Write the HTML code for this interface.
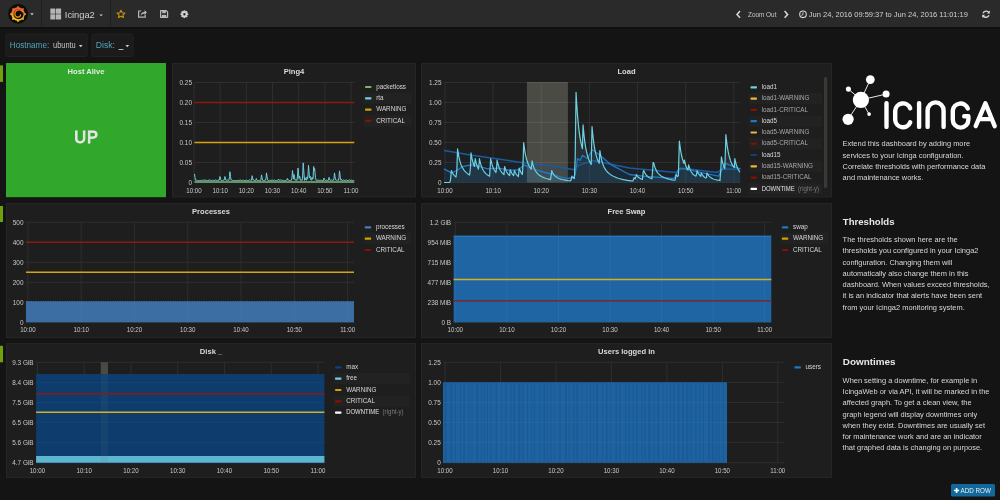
<!DOCTYPE html>
<html><head><meta charset="utf-8"><title>Icinga2 - Grafana</title>
<style>html,body{margin:0;padding:0;background:#141414;width:1000px;height:500px;overflow:hidden}svg{display:block;will-change:transform}text{white-space:pre}</style>
</head><body>
<svg width="1000" height="500" viewBox="0 0 1000 500" font-family='"Liberation Sans", sans-serif'><rect x="0.00" y="0.00" width="1000.00" height="500.00" fill="#141414" /><rect x="0.00" y="0.00" width="1000.00" height="27.00" fill="#2a2a2a" /><rect x="0.00" y="27.20" width="1000.00" height="1.40" fill="#101010" /><line x1="41.50" y1="0.00" x2="41.50" y2="27.00" stroke="#1e1e1e" stroke-width="1" /><line x1="110.50" y1="0.00" x2="110.50" y2="27.00" stroke="#1e1e1e" stroke-width="1" /><circle cx="18.1" cy="13.8" r="9.9" fill="#0b0b0b"/><defs><linearGradient id="lg" x1="0" y1="1" x2="0" y2="0"><stop offset="0.15" stop-color="#fcc012"/><stop offset="0.5" stop-color="#f8a41a"/><stop offset="0.55" stop-color="#f27a24"/><stop offset="1" stop-color="#f05a28"/></linearGradient></defs><polygon points="18.00,5.80 18.74,6.44 19.31,7.43 19.94,7.59 20.56,7.81 21.16,8.09 21.72,8.43 22.82,8.13 23.80,8.20 23.87,9.18 23.57,10.28 23.91,10.84 24.19,11.44 24.41,12.06 24.57,12.69 25.56,13.26 26.20,14.00 25.56,14.74 24.57,15.31 24.41,15.94 24.19,16.56 23.91,17.16 23.57,17.72 23.87,18.82 23.80,19.80 22.82,19.87 21.72,19.57 21.16,19.91 20.56,20.19 19.94,20.41 19.31,20.57 18.74,21.56 18.00,22.20 17.26,21.56 16.69,20.57 16.06,20.41 15.44,20.19 14.84,19.91 14.28,19.57 13.18,19.87 12.20,19.80 12.13,18.82 12.43,17.72 12.09,17.16 11.81,16.56 11.59,15.94 11.43,15.31 10.44,14.74 9.80,14.00 10.44,13.26 11.43,12.69 11.59,12.06 11.81,11.44 12.09,10.84 12.43,10.28 12.13,9.18 12.20,8.20 13.18,8.13 14.28,8.43 14.84,8.09 15.44,7.81 16.06,7.59 16.69,7.43 17.26,6.44" fill="url(#lg)"/><circle cx="18.5" cy="14.3" r="5.0" fill="#0b0b0b"/><polyline points="23.03,12.19 22.63,11.62 22.16,11.11 21.64,10.69 21.07,10.35 20.46,10.10 19.83,9.93 19.20,9.86 18.58,9.88 17.97,9.98 17.39,10.17 16.86,10.43 16.37,10.76 15.95,11.15 15.59,11.58 15.30,12.06 15.08,12.56 14.94,13.07 14.87,13.59 14.88,14.11 14.96,14.61 15.11,15.08 15.32,15.52 15.59,15.92 15.90,16.26 16.25,16.55 16.63,16.79 17.02,16.96 17.44,17.07 17.85,17.12 18.25,17.11 18.64,17.05 19.01,16.93 19.35,16.77 19.65,16.56 19.91,16.32 20.13,16.05 20.30,15.76 20.42,15.46 20.50,15.15 20.53,14.84" fill="none" stroke="url(#lg2)" stroke-width="1.35" stroke-linecap="round"/><defs><linearGradient id="lg2" gradientUnits="userSpaceOnUse" x1="0" y1="20" x2="0" y2="8"><stop offset="0" stop-color="#f9b41a"/><stop offset="1" stop-color="#f26522"/></linearGradient></defs><path d="M30.2,13.2 L33.8,13.2 L32,15.2 Z" fill="#c8c8c8"/><rect x="50.30" y="8.60" width="5.10" height="5.10" fill="#b4b4b4" rx="0.5"/><rect x="50.30" y="14.30" width="5.10" height="5.10" fill="#b4b4b4" rx="0.5"/><rect x="56.00" y="8.60" width="5.10" height="5.10" fill="#b4b4b4" rx="0.5"/><rect x="56.00" y="14.30" width="5.10" height="5.10" fill="#b4b4b4" rx="0.5"/><text x="64.80" y="18.00" font-size="9.8" fill="#d0d0d0" text-anchor="start" font-weight="normal" textLength="30" lengthAdjust="spacingAndGlyphs">Icinga2</text><path d="M99.3,14.4 L102.9,14.4 L101.1,16.3 Z" fill="#c8c8c8"/><path d="M121,10.3 L122.2,12.8 L124.9,13.1 L122.9,14.9 L123.5,17.6 L121,16.2 L118.5,17.6 L119.1,14.9 L117.1,13.1 L119.8,12.8 Z" fill="none" stroke="#c4960f" stroke-width="1.1" stroke-linejoin="round"/><path d="M145.2,14.8 L145.2,17.2 L138.6,17.2 L138.6,11 L141.2,11" fill="none" stroke="#b8b8b8" stroke-width="1.2" stroke-linejoin="round"/><path d="M140.6,15.6 Q141,12 144.6,12 L144.6,10.0 L146.8,12.6 L144.6,15.0 L144.6,13.4 Q142.2,13.4 140.6,15.6 Z" fill="#c0c0c0"/><path d="M160.6,10.6 L166.2,10.6 L167.6,12 L167.6,17.3 L160.6,17.3 Z" fill="none" stroke="#b8b8b8" stroke-width="1.2" stroke-linejoin="round"/><rect x="162.20" y="10.80" width="3.60" height="2.40" fill="#b8b8b8" /><rect x="161.90" y="14.90" width="4.40" height="2.20" fill="#b8b8b8" /><g transform="translate(184.4,14.2)"><circle r="2.15" fill="none" stroke="#d0d0d0" stroke-width="1.9"/><rect x="-0.85" y="-3.9" width="1.7" height="1.6" fill="#d0d0d0" transform="rotate(0)"/><rect x="-0.85" y="-3.9" width="1.7" height="1.6" fill="#d0d0d0" transform="rotate(45)"/><rect x="-0.85" y="-3.9" width="1.7" height="1.6" fill="#d0d0d0" transform="rotate(90)"/><rect x="-0.85" y="-3.9" width="1.7" height="1.6" fill="#d0d0d0" transform="rotate(135)"/><rect x="-0.85" y="-3.9" width="1.7" height="1.6" fill="#d0d0d0" transform="rotate(180)"/><rect x="-0.85" y="-3.9" width="1.7" height="1.6" fill="#d0d0d0" transform="rotate(225)"/><rect x="-0.85" y="-3.9" width="1.7" height="1.6" fill="#d0d0d0" transform="rotate(270)"/><rect x="-0.85" y="-3.9" width="1.7" height="1.6" fill="#d0d0d0" transform="rotate(315)"/></g><path d="M740,11 L737,14.4 L740,17.8" fill="none" stroke="#d8d8d8" stroke-width="1.5"/><text x="748.00" y="17.20" font-size="6.4" fill="#c8c8c8" text-anchor="start" font-weight="normal" >Zoom Out</text><path d="M784.6,11 L787.6,14.4 L784.6,17.8" fill="none" stroke="#d8d8d8" stroke-width="1.5"/><circle cx="803" cy="14.3" r="3.3" fill="none" stroke="#d8d8d8" stroke-width="1.1"/><path d="M803,12.3 L803,14.6 L801.4,15.3" fill="none" stroke="#d8d8d8" stroke-width="0.9"/><text x="808.80" y="17.20" font-size="7.5" fill="#d0d0d0" text-anchor="start" font-weight="normal" >Jun 24, 2016 09:59:37 to Jun 24, 2016 11:01:19</text><path d="M983,13.2 A3.6,3.6 0 0 1 989,12.4" fill="none" stroke="#d8d8d8" stroke-width="1.4"/><path d="M989.8,10.6 L989.8,13.6 L986.8,13.6 Z" fill="#d8d8d8"/><path d="M989,15.2 A3.6,3.6 0 0 1 983,16" fill="none" stroke="#d8d8d8" stroke-width="1.4"/><path d="M982.2,17.8 L982.2,14.8 L985.2,14.8 Z" fill="#d8d8d8"/><rect x="6.00" y="34.00" width="81.00" height="22.50" fill="#1c1b1b" stroke="#232222" stroke-width="1" rx="1.5"/><text x="9.80" y="48.40" font-size="8.4" fill="#52a3bf" text-anchor="start" font-weight="normal" textLength="39.4" lengthAdjust="spacingAndGlyphs">Hostname:</text><text x="53.00" y="48.40" font-size="8.2" fill="#c4c4c4" text-anchor="start" font-weight="normal" textLength="22.7" lengthAdjust="spacingAndGlyphs">ubuntu</text><path d="M78.9,45.1 L82.6,45.1 L80.75,47.2 Z" fill="#d0d0d0"/><rect x="92.00" y="34.00" width="41.00" height="22.50" fill="#1c1b1b" stroke="#232222" stroke-width="1" rx="1.5"/><text x="95.70" y="48.40" font-size="8.4" fill="#52a3bf" text-anchor="start" font-weight="normal" textLength="19.3" lengthAdjust="spacingAndGlyphs">Disk:</text><rect x="118.60" y="49.10" width="4.80" height="0.90" fill="#c4c4c4" /><path d="M125.5,45.1 L129.2,45.1 L127.35,47.2 Z" fill="#d0d0d0"/><rect x="0.00" y="65.40" width="3.00" height="16.50" fill="#70a00b" /><rect x="0.00" y="206.00" width="3.00" height="16.00" fill="#70a00b" /><rect x="0.00" y="345.80" width="3.00" height="16.50" fill="#70a00b" /><rect x="6.00" y="63.00" width="160.00" height="134.20" fill="#31a72c" /><text x="86.00" y="74.00" font-size="7.6" fill="#e3eee2" text-anchor="middle" font-weight="bold" >Host Alive</text><text x="86.50" y="142.70" font-size="16.5" fill="#e9e6ea" text-anchor="middle" font-weight="normal" stroke="#e9e6ea" stroke-width="0.85" letter-spacing="0.9">UP</text><rect x="172.50" y="63.50" width="243.00" height="133.50" fill="#1f1e1e" stroke="#262525" stroke-width="1"/><text x="294.00" y="73.80" font-size="7.6" fill="#d8d9da" text-anchor="middle" font-weight="bold" >Ping4</text><line x1="194.50" y1="82.50" x2="354.30" y2="82.50" stroke="#2e2e2e" stroke-width="1" /><text x="192.00" y="85.10" font-size="7.0" fill="#c8c8c8" text-anchor="end" font-weight="normal" textLength="12.46" lengthAdjust="spacingAndGlyphs">0.25</text><line x1="194.50" y1="102.50" x2="354.30" y2="102.50" stroke="#2e2e2e" stroke-width="1" /><text x="192.00" y="105.10" font-size="7.0" fill="#c8c8c8" text-anchor="end" font-weight="normal" textLength="12.46" lengthAdjust="spacingAndGlyphs">0.20</text><line x1="194.50" y1="122.50" x2="354.30" y2="122.50" stroke="#2e2e2e" stroke-width="1" /><text x="192.00" y="125.10" font-size="7.0" fill="#c8c8c8" text-anchor="end" font-weight="normal" textLength="12.46" lengthAdjust="spacingAndGlyphs">0.15</text><line x1="194.50" y1="142.50" x2="354.30" y2="142.50" stroke="#2e2e2e" stroke-width="1" /><text x="192.00" y="145.10" font-size="7.0" fill="#c8c8c8" text-anchor="end" font-weight="normal" textLength="12.46" lengthAdjust="spacingAndGlyphs">0.10</text><line x1="194.50" y1="162.50" x2="354.30" y2="162.50" stroke="#2e2e2e" stroke-width="1" /><text x="192.00" y="165.10" font-size="7.0" fill="#c8c8c8" text-anchor="end" font-weight="normal" textLength="12.46" lengthAdjust="spacingAndGlyphs">0.05</text><line x1="194.50" y1="182.50" x2="354.30" y2="182.50" stroke="#2e2e2e" stroke-width="1" /><text x="192.00" y="185.10" font-size="7.0" fill="#c8c8c8" text-anchor="end" font-weight="normal" textLength="3.56" lengthAdjust="spacingAndGlyphs">0</text><line x1="194.00" y1="82.50" x2="194.00" y2="182.50" stroke="#2e2e2e" stroke-width="1" /><text x="194.00" y="192.60" font-size="7.1" fill="#c8c8c8" text-anchor="middle" font-weight="normal" textLength="15.39" lengthAdjust="spacingAndGlyphs">10:00</text><line x1="220.17" y1="82.50" x2="220.17" y2="182.50" stroke="#2e2e2e" stroke-width="1" /><text x="220.17" y="192.60" font-size="7.1" fill="#c8c8c8" text-anchor="middle" font-weight="normal" textLength="15.39" lengthAdjust="spacingAndGlyphs">10:10</text><line x1="246.33" y1="82.50" x2="246.33" y2="182.50" stroke="#2e2e2e" stroke-width="1" /><text x="246.33" y="192.60" font-size="7.1" fill="#c8c8c8" text-anchor="middle" font-weight="normal" textLength="15.39" lengthAdjust="spacingAndGlyphs">10:20</text><line x1="272.50" y1="82.50" x2="272.50" y2="182.50" stroke="#2e2e2e" stroke-width="1" /><text x="272.50" y="192.60" font-size="7.1" fill="#c8c8c8" text-anchor="middle" font-weight="normal" textLength="15.39" lengthAdjust="spacingAndGlyphs">10:30</text><line x1="298.67" y1="82.50" x2="298.67" y2="182.50" stroke="#2e2e2e" stroke-width="1" /><text x="298.67" y="192.60" font-size="7.1" fill="#c8c8c8" text-anchor="middle" font-weight="normal" textLength="15.39" lengthAdjust="spacingAndGlyphs">10:40</text><line x1="324.83" y1="82.50" x2="324.83" y2="182.50" stroke="#2e2e2e" stroke-width="1" /><text x="324.83" y="192.60" font-size="7.1" fill="#c8c8c8" text-anchor="middle" font-weight="normal" textLength="15.39" lengthAdjust="spacingAndGlyphs">10:50</text><line x1="351.00" y1="82.50" x2="351.00" y2="182.50" stroke="#2e2e2e" stroke-width="1" /><text x="351.00" y="192.60" font-size="7.1" fill="#c8c8c8" text-anchor="middle" font-weight="normal" textLength="14.93" lengthAdjust="spacingAndGlyphs">11:00</text><path d="M194.50,182.50 L194.50,173.93 L195.00,177.50 L195.50,180.18 L196.00,180.64 L196.50,180.27 L197.00,180.41 L197.50,180.65 L198.00,180.29 L198.50,180.67 L199.00,180.35 L199.50,180.64 L200.00,180.63 L200.50,180.36 L201.00,180.04 L201.50,180.60 L202.00,180.52 L202.50,180.20 L203.00,179.94 L203.50,180.24 L204.00,180.38 L204.50,179.92 L205.00,180.66 L205.50,180.01 L206.00,180.47 L206.50,180.58 L207.00,180.61 L207.50,180.45 L208.00,180.05 L208.50,180.56 L209.00,180.23 L209.20,179.70 L209.50,180.19 L210.00,180.40 L210.50,180.26 L211.00,180.65 L211.50,180.65 L212.00,180.54 L212.50,180.16 L213.00,180.36 L213.50,180.45 L214.00,180.23 L214.50,180.34 L215.00,180.46 L215.50,180.06 L216.00,180.14 L216.50,180.50 L217.00,180.24 L217.50,180.28 L218.00,180.00 L218.50,180.12 L219.00,180.47 L219.50,179.17 L219.90,176.50 L220.00,176.93 L220.50,179.07 L221.00,180.09 L221.50,180.58 L222.00,180.31 L222.50,180.67 L223.00,180.17 L223.50,180.09 L224.00,180.24 L224.50,179.17 L224.90,176.50 L225.00,176.93 L225.50,179.07 L226.00,180.22 L226.50,180.24 L227.00,180.34 L227.50,180.03 L228.00,179.94 L228.50,180.32 L229.00,180.17 L229.50,176.50 L229.90,171.70 L230.00,172.47 L230.50,176.33 L231.00,179.91 L231.50,180.04 L232.00,180.47 L232.50,180.39 L233.00,180.17 L233.50,180.68 L234.00,180.33 L234.50,180.57 L235.00,180.61 L235.50,180.65 L236.00,180.09 L236.50,180.60 L237.00,180.50 L237.50,180.39 L238.00,180.00 L238.50,180.64 L239.00,180.34 L239.50,180.26 L240.00,179.99 L240.50,180.04 L241.00,180.01 L241.50,180.48 L242.00,180.37 L242.50,180.41 L243.00,179.99 L243.50,179.93 L244.00,180.58 L244.50,180.56 L245.00,180.51 L245.50,180.51 L246.00,180.31 L246.50,180.23 L247.00,180.49 L247.50,180.70 L248.00,180.36 L248.50,180.40 L249.00,180.25 L249.50,179.94 L250.00,180.15 L250.50,180.29 L251.00,180.21 L251.50,180.16 L252.00,176.46 L252.10,175.70 L252.50,177.64 L253.00,180.07 L253.50,180.00 L254.00,180.06 L254.50,180.39 L255.00,180.38 L255.50,180.62 L256.00,179.83 L256.30,178.50 L256.50,179.07 L257.00,180.50 L257.50,180.53 L258.00,180.57 L258.50,180.43 L259.00,180.66 L259.50,180.70 L260.00,180.58 L260.50,180.62 L261.00,179.12 L261.50,174.90 L262.00,177.61 L262.50,180.21 L263.00,180.58 L263.50,180.50 L264.00,180.42 L264.50,180.41 L265.00,180.60 L265.50,180.02 L266.00,178.23 L266.50,172.90 L267.00,176.33 L267.50,179.76 L268.00,180.62 L268.50,180.43 L269.00,180.49 L269.50,180.04 L270.00,180.57 L270.50,180.68 L271.00,179.94 L271.50,180.28 L272.00,180.58 L272.50,180.27 L273.00,180.68 L273.50,180.28 L274.00,179.92 L274.50,180.01 L275.00,180.14 L275.50,180.49 L276.00,180.41 L276.50,180.57 L277.00,180.08 L277.50,180.27 L278.00,180.08 L278.50,179.30 L279.00,180.44 L279.50,180.05 L280.00,179.91 L280.50,180.02 L281.00,180.06 L281.50,180.05 L282.00,180.11 L282.50,180.52 L283.00,180.29 L283.50,180.42 L284.00,180.68 L284.50,180.68 L285.00,180.48 L285.50,180.49 L286.00,180.15 L286.50,179.93 L287.00,180.34 L287.50,178.50 L288.00,179.91 L288.50,179.94 L289.00,180.41 L289.50,180.52 L290.00,180.52 L290.50,180.54 L291.00,180.54 L291.50,180.20 L292.00,177.17 L292.50,170.50 L293.00,174.79 L293.50,178.94 L294.00,174.50 L294.50,177.36 L295.00,180.17 L295.50,179.97 L296.00,180.07 L296.50,180.10 L297.00,180.32 L297.50,176.10 L298.00,168.10 L298.50,173.24 L299.00,178.39 L299.50,176.81 L299.60,176.10 L300.00,177.93 L300.50,180.21 L301.00,179.94 L301.50,180.12 L302.00,180.56 L302.50,178.14 L303.00,167.26 L303.20,162.90 L303.50,167.10 L304.00,174.10 L304.50,180.37 L305.00,177.70 L305.50,179.41 L306.00,180.17 L306.50,180.01 L307.00,176.90 L307.50,178.90 L308.00,174.86 L308.50,165.30 L309.00,171.44 L309.50,177.59 L310.00,176.10 L310.50,178.39 L311.00,180.00 L311.50,180.04 L312.00,177.30 L312.50,179.16 L313.00,178.94 L313.50,170.06 L313.70,166.50 L314.00,169.93 L314.50,170.06 L314.60,168.50 L315.00,172.50 L315.50,177.50 L316.00,179.97 L316.50,180.42 L317.00,180.33 L317.50,180.23 L318.00,179.98 L318.50,180.36 L319.00,179.97 L319.50,180.30 L320.00,180.27 L320.50,180.28 L321.00,180.69 L321.50,180.35 L322.00,180.55 L322.50,180.70 L323.00,180.06 L323.50,180.54 L324.00,178.10 L324.50,179.67 L325.00,180.25 L325.50,180.44 L326.00,180.29 L326.50,180.26 L327.00,180.07 L327.50,180.62 L328.00,180.25 L328.50,180.19 L329.00,177.30 L329.50,179.16 L330.00,180.29 L330.50,180.25 L331.00,180.09 L331.50,179.97 L332.00,180.35 L332.50,180.21 L333.00,180.30 L333.50,180.29 L334.00,178.23 L334.50,172.90 L335.00,176.33 L335.50,179.76 L336.00,179.95 L336.50,180.14 L337.00,180.00 L337.50,179.95 L338.00,180.49 L338.50,180.25 L339.00,177.34 L339.50,170.90 L340.00,175.04 L340.50,179.19 L341.00,180.35 L341.50,179.30 L342.00,180.44 L342.50,180.64 L343.00,180.16 L343.50,180.07 L344.00,179.98 L344.50,180.58 L345.00,180.13 L345.50,180.17 L346.00,180.59 L346.50,179.99 L347.00,179.93 L347.50,180.52 L348.00,179.94 L348.50,180.38 L349.00,180.31 L349.50,179.91 L350.00,180.03 L350.50,180.57 L351.00,180.35 L351.50,180.10 L352.00,180.43 L352.50,180.54 L353.00,180.45 L353.50,180.12 L354.00,180.68 L354.00,182.50 Z" fill="#6ED0E0" fill-opacity="0.1"/><line x1="194.50" y1="102.50" x2="354.30" y2="102.50" stroke="#8a1a0e" stroke-width="1.5" /><line x1="194.50" y1="142.50" x2="354.30" y2="142.50" stroke="#d5a411" stroke-width="1.5" /><polyline points="194.50,173.93 195.00,177.50 195.50,180.18 196.00,180.64 196.50,180.27 197.00,180.41 197.50,180.65 198.00,180.29 198.50,180.67 199.00,180.35 199.50,180.64 200.00,180.63 200.50,180.36 201.00,180.04 201.50,180.60 202.00,180.52 202.50,180.20 203.00,179.94 203.50,180.24 204.00,180.38 204.50,179.92 205.00,180.66 205.50,180.01 206.00,180.47 206.50,180.58 207.00,180.61 207.50,180.45 208.00,180.05 208.50,180.56 209.00,180.23 209.20,179.70 209.50,180.19 210.00,180.40 210.50,180.26 211.00,180.65 211.50,180.65 212.00,180.54 212.50,180.16 213.00,180.36 213.50,180.45 214.00,180.23 214.50,180.34 215.00,180.46 215.50,180.06 216.00,180.14 216.50,180.50 217.00,180.24 217.50,180.28 218.00,180.00 218.50,180.12 219.00,180.47 219.50,179.17 219.90,176.50 220.00,176.93 220.50,179.07 221.00,180.09 221.50,180.58 222.00,180.31 222.50,180.67 223.00,180.17 223.50,180.09 224.00,180.24 224.50,179.17 224.90,176.50 225.00,176.93 225.50,179.07 226.00,180.22 226.50,180.24 227.00,180.34 227.50,180.03 228.00,179.94 228.50,180.32 229.00,180.17 229.50,176.50 229.90,171.70 230.00,172.47 230.50,176.33 231.00,179.91 231.50,180.04 232.00,180.47 232.50,180.39 233.00,180.17 233.50,180.68 234.00,180.33 234.50,180.57 235.00,180.61 235.50,180.65 236.00,180.09 236.50,180.60 237.00,180.50 237.50,180.39 238.00,180.00 238.50,180.64 239.00,180.34 239.50,180.26 240.00,179.99 240.50,180.04 241.00,180.01 241.50,180.48 242.00,180.37 242.50,180.41 243.00,179.99 243.50,179.93 244.00,180.58 244.50,180.56 245.00,180.51 245.50,180.51 246.00,180.31 246.50,180.23 247.00,180.49 247.50,180.70 248.00,180.36 248.50,180.40 249.00,180.25 249.50,179.94 250.00,180.15 250.50,180.29 251.00,180.21 251.50,180.16 252.00,176.46 252.10,175.70 252.50,177.64 253.00,180.07 253.50,180.00 254.00,180.06 254.50,180.39 255.00,180.38 255.50,180.62 256.00,179.83 256.30,178.50 256.50,179.07 257.00,180.50 257.50,180.53 258.00,180.57 258.50,180.43 259.00,180.66 259.50,180.70 260.00,180.58 260.50,180.62 261.00,179.12 261.50,174.90 262.00,177.61 262.50,180.21 263.00,180.58 263.50,180.50 264.00,180.42 264.50,180.41 265.00,180.60 265.50,180.02 266.00,178.23 266.50,172.90 267.00,176.33 267.50,179.76 268.00,180.62 268.50,180.43 269.00,180.49 269.50,180.04 270.00,180.57 270.50,180.68 271.00,179.94 271.50,180.28 272.00,180.58 272.50,180.27 273.00,180.68 273.50,180.28 274.00,179.92 274.50,180.01 275.00,180.14 275.50,180.49 276.00,180.41 276.50,180.57 277.00,180.08 277.50,180.27 278.00,180.08 278.50,179.30 279.00,180.44 279.50,180.05 280.00,179.91 280.50,180.02 281.00,180.06 281.50,180.05 282.00,180.11 282.50,180.52 283.00,180.29 283.50,180.42 284.00,180.68 284.50,180.68 285.00,180.48 285.50,180.49 286.00,180.15 286.50,179.93 287.00,180.34 287.50,178.50 288.00,179.91 288.50,179.94 289.00,180.41 289.50,180.52 290.00,180.52 290.50,180.54 291.00,180.54 291.50,180.20 292.00,177.17 292.50,170.50 293.00,174.79 293.50,178.94 294.00,174.50 294.50,177.36 295.00,180.17 295.50,179.97 296.00,180.07 296.50,180.10 297.00,180.32 297.50,176.10 298.00,168.10 298.50,173.24 299.00,178.39 299.50,176.81 299.60,176.10 300.00,177.93 300.50,180.21 301.00,179.94 301.50,180.12 302.00,180.56 302.50,178.14 303.00,167.26 303.20,162.90 303.50,167.10 304.00,174.10 304.50,180.37 305.00,177.70 305.50,179.41 306.00,180.17 306.50,180.01 307.00,176.90 307.50,178.90 308.00,174.86 308.50,165.30 309.00,171.44 309.50,177.59 310.00,176.10 310.50,178.39 311.00,180.00 311.50,180.04 312.00,177.30 312.50,179.16 313.00,178.94 313.50,170.06 313.70,166.50 314.00,169.93 314.50,170.06 314.60,168.50 315.00,172.50 315.50,177.50 316.00,179.97 316.50,180.42 317.00,180.33 317.50,180.23 318.00,179.98 318.50,180.36 319.00,179.97 319.50,180.30 320.00,180.27 320.50,180.28 321.00,180.69 321.50,180.35 322.00,180.55 322.50,180.70 323.00,180.06 323.50,180.54 324.00,178.10 324.50,179.67 325.00,180.25 325.50,180.44 326.00,180.29 326.50,180.26 327.00,180.07 327.50,180.62 328.00,180.25 328.50,180.19 329.00,177.30 329.50,179.16 330.00,180.29 330.50,180.25 331.00,180.09 331.50,179.97 332.00,180.35 332.50,180.21 333.00,180.30 333.50,180.29 334.00,178.23 334.50,172.90 335.00,176.33 335.50,179.76 336.00,179.95 336.50,180.14 337.00,180.00 337.50,179.95 338.00,180.49 338.50,180.25 339.00,177.34 339.50,170.90 340.00,175.04 340.50,179.19 341.00,180.35 341.50,179.30 342.00,180.44 342.50,180.64 343.00,180.16 343.50,180.07 344.00,179.98 344.50,180.58 345.00,180.13 345.50,180.17 346.00,180.59 346.50,179.99 347.00,179.93 347.50,180.52 348.00,179.94 348.50,180.38 349.00,180.31 349.50,179.91 350.00,180.03 350.50,180.57 351.00,180.35 351.50,180.10 352.00,180.43 352.50,180.54 353.00,180.45 353.50,180.12 354.00,180.68" fill="none" stroke="#6ED0E0" stroke-width="1.0" stroke-linejoin="round" /><line x1="194.50" y1="182.00" x2="354.30" y2="182.00" stroke="#7EB26D" stroke-width="1.3" /><rect x="365.00" y="85.90" width="6.50" height="2.20" fill="#7EB26D" rx="0.8"/><text x="376.20" y="88.70" font-size="6.3" fill="#d8d8d8" text-anchor="start" font-weight="normal" >packetloss</text><rect x="363.50" y="92.60" width="48.00" height="11.30" fill="#232222" /><rect x="365.00" y="97.20" width="6.50" height="2.20" fill="#6ED0E0" rx="0.8"/><text x="376.20" y="100.00" font-size="6.3" fill="#d8d8d8" text-anchor="start" font-weight="normal" >rta</text><rect x="365.00" y="108.50" width="6.50" height="2.20" fill="#CCA300" rx="0.8"/><text x="376.20" y="111.30" font-size="6.3" fill="#d8d8d8" text-anchor="start" font-weight="normal" >WARNING</text><rect x="363.50" y="115.20" width="48.00" height="11.30" fill="#232222" /><rect x="365.00" y="119.80" width="6.50" height="2.20" fill="#890F02" rx="0.8"/><text x="376.20" y="122.60" font-size="6.3" fill="#d8d8d8" text-anchor="start" font-weight="normal" >CRITICAL</text><rect x="421.50" y="63.50" width="410.00" height="133.50" fill="#1f1e1e" stroke="#262525" stroke-width="1"/><text x="626.50" y="73.80" font-size="7.6" fill="#d8d9da" text-anchor="middle" font-weight="bold" >Load</text><rect x="526.90" y="82.00" width="41.00" height="100.50" fill="#4a4b45" /><line x1="444.00" y1="82.50" x2="740.40" y2="82.50" stroke="#ffffff" stroke-width="1" stroke-opacity="0.075"/><text x="441.50" y="85.10" font-size="7.0" fill="#c8c8c8" text-anchor="end" font-weight="normal" textLength="12.46" lengthAdjust="spacingAndGlyphs">1.25</text><line x1="444.00" y1="102.50" x2="740.40" y2="102.50" stroke="#ffffff" stroke-width="1" stroke-opacity="0.075"/><text x="441.50" y="105.10" font-size="7.0" fill="#c8c8c8" text-anchor="end" font-weight="normal" textLength="12.46" lengthAdjust="spacingAndGlyphs">1.00</text><line x1="444.00" y1="122.50" x2="740.40" y2="122.50" stroke="#ffffff" stroke-width="1" stroke-opacity="0.075"/><text x="441.50" y="125.10" font-size="7.0" fill="#c8c8c8" text-anchor="end" font-weight="normal" textLength="12.46" lengthAdjust="spacingAndGlyphs">0.75</text><line x1="444.00" y1="142.50" x2="740.40" y2="142.50" stroke="#ffffff" stroke-width="1" stroke-opacity="0.075"/><text x="441.50" y="145.10" font-size="7.0" fill="#c8c8c8" text-anchor="end" font-weight="normal" textLength="12.46" lengthAdjust="spacingAndGlyphs">0.50</text><line x1="444.00" y1="162.50" x2="740.40" y2="162.50" stroke="#ffffff" stroke-width="1" stroke-opacity="0.075"/><text x="441.50" y="165.10" font-size="7.0" fill="#c8c8c8" text-anchor="end" font-weight="normal" textLength="12.46" lengthAdjust="spacingAndGlyphs">0.25</text><line x1="444.00" y1="182.50" x2="740.40" y2="182.50" stroke="#ffffff" stroke-width="1" stroke-opacity="0.075"/><text x="441.50" y="185.10" font-size="7.0" fill="#c8c8c8" text-anchor="end" font-weight="normal" textLength="3.56" lengthAdjust="spacingAndGlyphs">0</text><line x1="445.00" y1="82.50" x2="445.00" y2="182.50" stroke="#ffffff" stroke-width="1" stroke-opacity="0.075"/><text x="445.00" y="192.60" font-size="7.1" fill="#c8c8c8" text-anchor="middle" font-weight="normal" textLength="15.39" lengthAdjust="spacingAndGlyphs">10:00</text><line x1="493.13" y1="82.50" x2="493.13" y2="182.50" stroke="#ffffff" stroke-width="1" stroke-opacity="0.075"/><text x="493.13" y="192.60" font-size="7.1" fill="#c8c8c8" text-anchor="middle" font-weight="normal" textLength="15.39" lengthAdjust="spacingAndGlyphs">10:10</text><line x1="541.27" y1="82.50" x2="541.27" y2="182.50" stroke="#ffffff" stroke-width="1" stroke-opacity="0.075"/><text x="541.27" y="192.60" font-size="7.1" fill="#c8c8c8" text-anchor="middle" font-weight="normal" textLength="15.39" lengthAdjust="spacingAndGlyphs">10:20</text><line x1="589.40" y1="82.50" x2="589.40" y2="182.50" stroke="#ffffff" stroke-width="1" stroke-opacity="0.075"/><text x="589.40" y="192.60" font-size="7.1" fill="#c8c8c8" text-anchor="middle" font-weight="normal" textLength="15.39" lengthAdjust="spacingAndGlyphs">10:30</text><line x1="637.53" y1="82.50" x2="637.53" y2="182.50" stroke="#ffffff" stroke-width="1" stroke-opacity="0.075"/><text x="637.53" y="192.60" font-size="7.1" fill="#c8c8c8" text-anchor="middle" font-weight="normal" textLength="15.39" lengthAdjust="spacingAndGlyphs">10:40</text><line x1="685.67" y1="82.50" x2="685.67" y2="182.50" stroke="#ffffff" stroke-width="1" stroke-opacity="0.075"/><text x="685.67" y="192.60" font-size="7.1" fill="#c8c8c8" text-anchor="middle" font-weight="normal" textLength="15.39" lengthAdjust="spacingAndGlyphs">10:50</text><line x1="733.80" y1="82.50" x2="733.80" y2="182.50" stroke="#ffffff" stroke-width="1" stroke-opacity="0.075"/><text x="733.80" y="192.60" font-size="7.1" fill="#c8c8c8" text-anchor="middle" font-weight="normal" textLength="14.93" lengthAdjust="spacingAndGlyphs">11:00</text><path d="M444.00,182.50 L444.00,182.50 L444.80,182.50 L445.60,182.50 L446.40,182.50 L447.20,182.50 L448.00,182.50 L448.80,182.50 L449.60,182.50 L450.40,180.65 L451.20,172.65 L451.41,170.55 L452.00,171.92 L452.80,173.46 L453.60,174.67 L454.40,175.62 L455.20,176.38 L456.00,177.00 L456.80,170.66 L457.58,148.92 L457.60,149.07 L458.40,154.27 L459.20,158.29 L460.00,161.43 L460.80,163.91 L461.60,165.91 L462.40,167.55 L463.20,168.91 L464.00,170.07 L464.80,171.06 L465.60,171.92 L466.40,172.68 L467.20,173.36 L468.00,173.98 L468.80,174.54 L469.60,175.05 L470.40,168.25 L471.02,152.96 L471.20,154.03 L472.00,158.39 L472.80,161.76 L473.60,164.40 L474.40,166.50 L475.20,158.98 L475.22,158.58 L476.00,162.15 L476.80,165.06 L477.60,167.33 L478.40,169.13 L479.20,163.02 L479.43,158.52 L480.00,161.29 L480.80,164.39 L481.60,166.81 L482.40,168.71 L483.20,170.24 L484.00,171.48 L484.80,172.51 L485.60,173.38 L486.40,174.12 L487.20,174.76 L488.00,175.32 L488.80,175.83 L489.60,176.28 L490.40,163.11 L490.63,158.51 L491.20,161.27 L492.00,164.38 L492.80,166.79 L493.60,168.70 L494.40,170.23 L495.20,171.48 L496.00,172.51 L496.80,165.19 L497.07,160.15 L497.60,162.51 L498.40,165.45 L499.20,167.74 L500.00,169.54 L500.80,170.98 L501.60,172.15 L502.40,173.13 L503.20,173.94 L504.00,174.64 L504.64,166.51 L504.80,167.07 L505.60,169.43 L506.40,171.26 L507.20,172.69 L508.00,173.83 L508.80,174.75 L509.60,175.50 L510.24,169.71 L510.40,170.15 L511.20,172.04 L512.00,173.51 L512.80,174.65 L513.60,175.56 L514.40,170.90 L514.44,170.50 L515.20,172.29 L516.00,173.75 L516.80,174.90 L517.60,175.80 L518.40,176.53 L519.20,168.12 L520.00,170.34 L520.80,172.08 L521.60,173.43 L522.40,174.50 L523.20,158.62 L523.68,142.62 L524.00,145.17 L524.80,150.79 L525.60,155.15 L526.40,158.58 L527.20,161.30 L528.00,163.51 L528.80,165.33 L529.60,166.86 L530.40,168.15 L531.20,169.27 L532.00,162.46 L532.09,160.92 L532.80,163.95 L533.60,166.62 L534.40,168.70 L535.20,170.35 L536.00,171.68 L536.80,172.76 L537.60,173.65 L538.40,174.41 L539.20,175.06 L540.00,175.63 L540.80,176.12 L541.60,176.57 L542.40,176.97 L543.20,177.33 L544.00,177.67 L544.80,177.97 L545.60,178.26 L546.40,178.52 L547.20,178.76 L548.00,178.99 L548.80,179.20 L549.60,179.40 L550.40,179.59 L551.20,175.45 L551.69,170.55 L552.00,171.27 L552.80,172.97 L553.60,174.28 L554.40,175.31 L555.20,176.13 L556.00,176.80 L556.80,177.34 L557.60,177.80 L558.40,178.19 L559.20,178.53 L560.00,178.82 L560.80,179.08 L561.60,179.32 L562.40,179.53 L563.20,179.72 L564.00,179.90 L564.80,180.06 L565.60,180.21 L566.40,180.36 L567.20,180.49 L568.00,180.61 L568.80,180.72 L569.60,180.83 L570.40,180.93 L571.20,179.63 L571.86,176.11 L572.00,176.29 L572.80,177.25 L573.60,177.98 L574.40,178.56 L575.20,157.22 L576.00,96.95 L576.06,92.43 L576.80,105.20 L577.60,116.31 L578.40,124.97 L579.20,131.83 L580.00,137.34 L580.80,141.84 L581.60,145.58 L582.40,148.73 L583.07,124.94 L583.20,126.56 L584.00,135.17 L584.80,141.81 L585.60,147.02 L586.40,151.15 L587.20,154.48 L588.00,157.22 L588.80,159.50 L589.60,161.43 L590.40,163.10 L591.20,164.55 L592.00,127.94 L592.03,126.54 L592.80,134.94 L593.60,141.75 L594.40,147.06 L595.20,151.27 L596.00,154.65 L596.80,157.42 L597.60,159.72 L598.40,161.66 L599.20,163.32 L599.87,150.61 L600.00,151.38 L600.80,156.17 L601.60,159.87 L602.40,162.77 L603.20,165.07 L604.00,166.92 L604.80,168.44 L605.60,169.71 L606.40,170.79 L607.20,171.71 L608.00,172.52 L608.80,173.24 L609.60,173.88 L610.40,174.45 L611.20,174.98 L612.00,175.46 L612.20,175.58 L612.48,175.73 L612.80,175.91 L613.60,176.32 L614.40,176.70 L615.20,177.05 L616.00,177.39 L616.80,177.70 L617.60,177.99 L618.40,178.26 L619.20,178.51 L620.00,178.75 L620.80,178.98 L621.60,179.19 L622.40,179.39 L623.20,179.57 L624.00,179.75 L624.80,179.91 L625.60,180.07 L626.40,180.21 L627.20,180.35 L628.00,180.48 L628.80,180.60 L629.60,180.71 L630.40,180.82 L631.20,180.92 L632.00,181.01 L632.80,181.10 L633.60,179.32 L634.01,177.70 L634.40,178.09 L635.20,178.75 L636.00,176.42 L636.29,174.50 L636.80,175.34 L637.60,176.39 L638.40,177.21 L639.20,177.86 L640.00,178.38 L640.80,178.80 L641.60,179.15 L642.40,179.44 L643.20,172.15 L643.29,171.31 L643.81,170.50 L644.00,170.99 L644.80,172.75 L645.60,174.11 L646.40,175.18 L647.20,176.02 L648.00,176.71 L648.80,177.27 L649.60,177.74 L650.40,178.14 L651.20,178.48 L652.00,178.78 L652.80,167.42 L653.10,162.52 L653.60,162.72 L653.61,162.56 L654.40,165.58 L655.20,167.99 L656.00,169.88 L656.80,171.38 L657.60,172.58 L658.40,173.56 L659.20,174.38 L660.00,175.07 L660.80,175.66 L661.60,176.18 L662.40,176.64 L663.20,177.04 L664.00,177.41 L664.80,177.75 L665.60,178.05 L666.40,178.33 L667.20,178.59 L668.00,178.83 L668.80,179.06 L669.60,179.27 L670.40,179.46 L671.20,179.65 L672.00,179.82 L672.80,179.98 L673.60,180.13 L674.40,180.27 L675.20,179.98 L676.00,174.65 L676.02,174.52 L676.80,175.72 L677.60,176.69 L678.40,175.00 L679.20,147.27 L679.38,141.03 L680.00,146.05 L680.80,151.36 L681.60,155.49 L682.40,158.76 L683.20,161.37 L684.00,163.50 L684.43,160.12 L684.80,161.85 L685.60,164.94 L686.40,167.34 L687.20,169.14 L688.00,170.11 L688.63,164.91 L688.80,165.56 L689.60,168.15 L690.40,170.16 L691.20,171.73 L692.00,172.98 L692.80,173.99 L693.60,174.77 L694.40,175.25 L695.20,175.69 L696.00,176.10 L696.80,172.81 L697.03,170.51 L697.60,171.88 L698.40,173.44 L699.20,174.65 L700.00,175.60 L700.80,176.36 L701.23,172.92 L701.60,173.64 L702.40,174.97 L703.20,176.00 L704.00,176.80 L704.80,177.45 L705.60,177.97 L706.40,177.70 L707.00,172.90 L707.20,173.31 L708.00,174.72 L708.80,175.80 L709.60,176.65 L710.40,177.33 L711.20,177.87 L712.00,178.32 L712.80,178.70 L713.60,179.01 L714.40,179.29 L715.20,179.53 L716.00,179.74 L716.80,179.93 L717.60,180.10 L718.40,180.26 L719.20,180.40 L720.00,180.53 L720.80,169.71 L721.40,156.91 L721.60,158.00 L722.40,161.74 L723.20,164.63 L724.00,166.90 L724.80,168.70 L725.60,145.79 L725.88,134.59 L726.40,139.57 L727.20,145.89 L728.00,150.81 L728.80,154.68 L729.60,157.78 L730.40,160.30 L730.64,160.97 L731.20,162.39 L732.00,164.14 L732.80,165.64 L733.60,166.93 L734.40,167.42 L734.85,158.52 L735.20,160.28 L736.00,163.61 L736.80,166.20 L737.60,168.23 L738.40,169.85 L739.20,171.16 L740.00,172.25 L740.00,182.50 Z" fill="#6ED0E0" fill-opacity="0.1"/><path d="M444.00,182.50 L444.00,168.90 L451.40,172.90 L457.00,170.50 L462.60,166.50 L471.00,164.90 L479.40,166.50 L487.80,168.90 L499.00,168.10 L510.00,170.50 L518.60,169.70 L524.20,164.90 L529.80,167.30 L538.20,170.50 L552.30,174.50 L566.30,178.50 L573.30,177.70 L575.20,174.50 L577.50,158.50 L580.00,160.50 L582.50,155.30 L587.40,158.50 L592.40,149.70 L598.00,153.70 L611.40,164.90 L629.50,174.50 L642.70,176.10 L674.00,178.50 L679.00,168.90 L687.30,168.90 L695.50,171.30 L718.60,176.10 L725.20,163.30 L740.40,168.90 L740.40,182.50 Z" fill="#1F78C1" fill-opacity="0.1"/><path d="M444.00,182.50 L444.00,150.50 L472.00,155.30 L500.00,159.30 L527.00,163.30 L555.00,166.50 L574.70,169.70 L577.00,166.50 L580.00,164.90 L593.00,160.50 L629.50,168.10 L675.70,172.50 L680.70,168.10 L717.00,172.50 L722.00,169.30 L740.40,168.90 L740.40,182.50 Z" fill="#0A437C" fill-opacity="0.1"/><polyline points="444.00,150.50 472.00,155.30 500.00,159.30 527.00,163.30 555.00,166.50 574.70,169.70 577.00,166.50 580.00,164.90 593.00,160.50 629.50,168.10 675.70,172.50 680.70,168.10 717.00,172.50 722.00,169.30 740.40,168.90" fill="none" stroke="#1A5B9E" stroke-width="1.5" stroke-linejoin="round" /><polyline points="444.00,168.90 451.40,172.90 457.00,170.50 462.60,166.50 471.00,164.90 479.40,166.50 487.80,168.90 499.00,168.10 510.00,170.50 518.60,169.70 524.20,164.90 529.80,167.30 538.20,170.50 552.30,174.50 566.30,178.50 573.30,177.70 575.20,174.50 577.50,158.50 580.00,160.50 582.50,155.30 587.40,158.50 592.40,149.70 598.00,153.70 611.40,164.90 629.50,174.50 642.70,176.10 674.00,178.50 679.00,168.90 687.30,168.90 695.50,171.30 718.60,176.10 725.20,163.30 740.40,168.90" fill="none" stroke="#1F78C1" stroke-width="1.3" stroke-linejoin="round" /><polyline points="444.00,182.50 444.80,182.50 445.60,182.50 446.40,182.50 447.20,182.50 448.00,182.50 448.80,182.50 449.60,182.50 450.40,180.65 451.20,172.65 451.41,170.55 452.00,171.92 452.80,173.46 453.60,174.67 454.40,175.62 455.20,176.38 456.00,177.00 456.80,170.66 457.58,148.92 457.60,149.07 458.40,154.27 459.20,158.29 460.00,161.43 460.80,163.91 461.60,165.91 462.40,167.55 463.20,168.91 464.00,170.07 464.80,171.06 465.60,171.92 466.40,172.68 467.20,173.36 468.00,173.98 468.80,174.54 469.60,175.05 470.40,168.25 471.02,152.96 471.20,154.03 472.00,158.39 472.80,161.76 473.60,164.40 474.40,166.50 475.20,158.98 475.22,158.58 476.00,162.15 476.80,165.06 477.60,167.33 478.40,169.13 479.20,163.02 479.43,158.52 480.00,161.29 480.80,164.39 481.60,166.81 482.40,168.71 483.20,170.24 484.00,171.48 484.80,172.51 485.60,173.38 486.40,174.12 487.20,174.76 488.00,175.32 488.80,175.83 489.60,176.28 490.40,163.11 490.63,158.51 491.20,161.27 492.00,164.38 492.80,166.79 493.60,168.70 494.40,170.23 495.20,171.48 496.00,172.51 496.80,165.19 497.07,160.15 497.60,162.51 498.40,165.45 499.20,167.74 500.00,169.54 500.80,170.98 501.60,172.15 502.40,173.13 503.20,173.94 504.00,174.64 504.64,166.51 504.80,167.07 505.60,169.43 506.40,171.26 507.20,172.69 508.00,173.83 508.80,174.75 509.60,175.50 510.24,169.71 510.40,170.15 511.20,172.04 512.00,173.51 512.80,174.65 513.60,175.56 514.40,170.90 514.44,170.50 515.20,172.29 516.00,173.75 516.80,174.90 517.60,175.80 518.40,176.53 519.20,168.12 520.00,170.34 520.80,172.08 521.60,173.43 522.40,174.50 523.20,158.62 523.68,142.62 524.00,145.17 524.80,150.79 525.60,155.15 526.40,158.58 527.20,161.30 528.00,163.51 528.80,165.33 529.60,166.86 530.40,168.15 531.20,169.27 532.00,162.46 532.09,160.92 532.80,163.95 533.60,166.62 534.40,168.70 535.20,170.35 536.00,171.68 536.80,172.76 537.60,173.65 538.40,174.41 539.20,175.06 540.00,175.63 540.80,176.12 541.60,176.57 542.40,176.97 543.20,177.33 544.00,177.67 544.80,177.97 545.60,178.26 546.40,178.52 547.20,178.76 548.00,178.99 548.80,179.20 549.60,179.40 550.40,179.59 551.20,175.45 551.69,170.55 552.00,171.27 552.80,172.97 553.60,174.28 554.40,175.31 555.20,176.13 556.00,176.80 556.80,177.34 557.60,177.80 558.40,178.19 559.20,178.53 560.00,178.82 560.80,179.08 561.60,179.32 562.40,179.53 563.20,179.72 564.00,179.90 564.80,180.06 565.60,180.21 566.40,180.36 567.20,180.49 568.00,180.61 568.80,180.72 569.60,180.83 570.40,180.93 571.20,179.63 571.86,176.11 572.00,176.29 572.80,177.25 573.60,177.98 574.40,178.56 575.20,157.22 576.00,96.95 576.06,92.43 576.80,105.20 577.60,116.31 578.40,124.97 579.20,131.83 580.00,137.34 580.80,141.84 581.60,145.58 582.40,148.73 583.07,124.94 583.20,126.56 584.00,135.17 584.80,141.81 585.60,147.02 586.40,151.15 587.20,154.48 588.00,157.22 588.80,159.50 589.60,161.43 590.40,163.10 591.20,164.55 592.00,127.94 592.03,126.54 592.80,134.94 593.60,141.75 594.40,147.06 595.20,151.27 596.00,154.65 596.80,157.42 597.60,159.72 598.40,161.66 599.20,163.32 599.87,150.61 600.00,151.38 600.80,156.17 601.60,159.87 602.40,162.77 603.20,165.07 604.00,166.92 604.80,168.44 605.60,169.71 606.40,170.79 607.20,171.71 608.00,172.52 608.80,173.24 609.60,173.88 610.40,174.45 611.20,174.98 612.00,175.46 612.20,175.58 612.48,175.73 612.80,175.91 613.60,176.32 614.40,176.70 615.20,177.05 616.00,177.39 616.80,177.70 617.60,177.99 618.40,178.26 619.20,178.51 620.00,178.75 620.80,178.98 621.60,179.19 622.40,179.39 623.20,179.57 624.00,179.75 624.80,179.91 625.60,180.07 626.40,180.21 627.20,180.35 628.00,180.48 628.80,180.60 629.60,180.71 630.40,180.82 631.20,180.92 632.00,181.01 632.80,181.10 633.60,179.32 634.01,177.70 634.40,178.09 635.20,178.75 636.00,176.42 636.29,174.50 636.80,175.34 637.60,176.39 638.40,177.21 639.20,177.86 640.00,178.38 640.80,178.80 641.60,179.15 642.40,179.44 643.20,172.15 643.29,171.31 643.81,170.50 644.00,170.99 644.80,172.75 645.60,174.11 646.40,175.18 647.20,176.02 648.00,176.71 648.80,177.27 649.60,177.74 650.40,178.14 651.20,178.48 652.00,178.78 652.80,167.42 653.10,162.52 653.60,162.72 653.61,162.56 654.40,165.58 655.20,167.99 656.00,169.88 656.80,171.38 657.60,172.58 658.40,173.56 659.20,174.38 660.00,175.07 660.80,175.66 661.60,176.18 662.40,176.64 663.20,177.04 664.00,177.41 664.80,177.75 665.60,178.05 666.40,178.33 667.20,178.59 668.00,178.83 668.80,179.06 669.60,179.27 670.40,179.46 671.20,179.65 672.00,179.82 672.80,179.98 673.60,180.13 674.40,180.27 675.20,179.98 676.00,174.65 676.02,174.52 676.80,175.72 677.60,176.69 678.40,175.00 679.20,147.27 679.38,141.03 680.00,146.05 680.80,151.36 681.60,155.49 682.40,158.76 683.20,161.37 684.00,163.50 684.43,160.12 684.80,161.85 685.60,164.94 686.40,167.34 687.20,169.14 688.00,170.11 688.63,164.91 688.80,165.56 689.60,168.15 690.40,170.16 691.20,171.73 692.00,172.98 692.80,173.99 693.60,174.77 694.40,175.25 695.20,175.69 696.00,176.10 696.80,172.81 697.03,170.51 697.60,171.88 698.40,173.44 699.20,174.65 700.00,175.60 700.80,176.36 701.23,172.92 701.60,173.64 702.40,174.97 703.20,176.00 704.00,176.80 704.80,177.45 705.60,177.97 706.40,177.70 707.00,172.90 707.20,173.31 708.00,174.72 708.80,175.80 709.60,176.65 710.40,177.33 711.20,177.87 712.00,178.32 712.80,178.70 713.60,179.01 714.40,179.29 715.20,179.53 716.00,179.74 716.80,179.93 717.60,180.10 718.40,180.26 719.20,180.40 720.00,180.53 720.80,169.71 721.40,156.91 721.60,158.00 722.40,161.74 723.20,164.63 724.00,166.90 724.80,168.70 725.60,145.79 725.88,134.59 726.40,139.57 727.20,145.89 728.00,150.81 728.80,154.68 729.60,157.78 730.40,160.30 730.64,160.97 731.20,162.39 732.00,164.14 732.80,165.64 733.60,166.93 734.40,167.42 734.85,158.52 735.20,160.28 736.00,163.61 736.80,166.20 737.60,168.23 738.40,169.85 739.20,171.16 740.00,172.25" fill="none" stroke="#6ED0E0" stroke-width="1.2" stroke-linejoin="round" /><rect x="750.50" y="86.30" width="6.50" height="2.20" fill="#6ED0E0" rx="0.8"/><text x="761.70" y="89.10" font-size="6.3" fill="#d8d8d8" text-anchor="start" font-weight="normal" >load1</text><rect x="749.00" y="92.97" width="73.00" height="11.27" fill="#232222" /><rect x="750.50" y="97.57" width="6.50" height="2.20" fill="#EAB839" rx="0.8"/><text x="761.70" y="100.37" font-size="6.3" fill="#a8a8a8" text-anchor="start" font-weight="normal" >load1-WARNING</text><rect x="750.50" y="108.84" width="6.50" height="2.20" fill="#890F02" rx="0.8"/><text x="761.70" y="111.64" font-size="6.3" fill="#a8a8a8" text-anchor="start" font-weight="normal" >load1-CRITICAL</text><rect x="749.00" y="115.51" width="73.00" height="11.27" fill="#232222" /><rect x="750.50" y="120.11" width="6.50" height="2.20" fill="#1F78C1" rx="0.8"/><text x="761.70" y="122.91" font-size="6.3" fill="#d8d8d8" text-anchor="start" font-weight="normal" >load5</text><rect x="750.50" y="131.38" width="6.50" height="2.20" fill="#EAB839" rx="0.8"/><text x="761.70" y="134.18" font-size="6.3" fill="#a8a8a8" text-anchor="start" font-weight="normal" >load5-WARNING</text><rect x="749.00" y="138.05" width="73.00" height="11.27" fill="#232222" /><rect x="750.50" y="142.65" width="6.50" height="2.20" fill="#890F02" rx="0.8"/><text x="761.70" y="145.45" font-size="6.3" fill="#a8a8a8" text-anchor="start" font-weight="normal" >load5-CRITICAL</text><rect x="750.50" y="153.92" width="6.50" height="2.20" fill="#0A437C" rx="0.8"/><text x="761.70" y="156.72" font-size="6.3" fill="#d8d8d8" text-anchor="start" font-weight="normal" >load15</text><rect x="749.00" y="160.59" width="73.00" height="11.27" fill="#232222" /><rect x="750.50" y="165.19" width="6.50" height="2.20" fill="#EAB839" rx="0.8"/><text x="761.70" y="167.99" font-size="6.3" fill="#a8a8a8" text-anchor="start" font-weight="normal" >load15-WARNING</text><rect x="750.50" y="176.46" width="6.50" height="2.20" fill="#890F02" rx="0.8"/><text x="761.70" y="179.26" font-size="6.3" fill="#a8a8a8" text-anchor="start" font-weight="normal" >load15-CRITICAL</text><rect x="749.00" y="183.13" width="73.00" height="11.27" fill="#232222" /><rect x="750.50" y="187.73" width="6.50" height="2.20" fill="#ffffff" rx="0.8"/><text x="761.70" y="190.53" font-size="6.3" fill="#e0e0e0" text-anchor="start" font-weight="normal" textLength="33" lengthAdjust="spacingAndGlyphs">DOWNTIME</text><text x="798.10" y="190.53" font-size="6.6" fill="#7b7b7b" textLength="21" lengthAdjust="spacingAndGlyphs">(right-y)</text><rect x="824.00" y="77.00" width="3.20" height="111.00" fill="#3a3934" rx="1.5"/><rect x="6.50" y="203.50" width="409.00" height="134.00" fill="#1f1e1e" stroke="#262525" stroke-width="1"/><text x="211.00" y="213.80" font-size="7.6" fill="#d8d9da" text-anchor="middle" font-weight="bold" >Processes</text><line x1="26.00" y1="222.30" x2="354.00" y2="222.30" stroke="#2e2e2e" stroke-width="1" /><text x="23.50" y="224.90" font-size="7.0" fill="#c8c8c8" text-anchor="end" font-weight="normal" textLength="10.68" lengthAdjust="spacingAndGlyphs">500</text><line x1="26.00" y1="242.30" x2="354.00" y2="242.30" stroke="#2e2e2e" stroke-width="1" /><text x="23.50" y="244.90" font-size="7.0" fill="#c8c8c8" text-anchor="end" font-weight="normal" textLength="10.68" lengthAdjust="spacingAndGlyphs">400</text><line x1="26.00" y1="262.30" x2="354.00" y2="262.30" stroke="#2e2e2e" stroke-width="1" /><text x="23.50" y="264.90" font-size="7.0" fill="#c8c8c8" text-anchor="end" font-weight="normal" textLength="10.68" lengthAdjust="spacingAndGlyphs">300</text><line x1="26.00" y1="282.30" x2="354.00" y2="282.30" stroke="#2e2e2e" stroke-width="1" /><text x="23.50" y="284.90" font-size="7.0" fill="#c8c8c8" text-anchor="end" font-weight="normal" textLength="10.68" lengthAdjust="spacingAndGlyphs">200</text><line x1="26.00" y1="302.30" x2="354.00" y2="302.30" stroke="#2e2e2e" stroke-width="1" /><text x="23.50" y="304.90" font-size="7.0" fill="#c8c8c8" text-anchor="end" font-weight="normal" textLength="10.68" lengthAdjust="spacingAndGlyphs">100</text><line x1="26.00" y1="322.30" x2="354.00" y2="322.30" stroke="#2e2e2e" stroke-width="1" /><text x="23.50" y="324.90" font-size="7.0" fill="#c8c8c8" text-anchor="end" font-weight="normal" textLength="3.56" lengthAdjust="spacingAndGlyphs">0</text><line x1="27.90" y1="222.30" x2="27.90" y2="322.30" stroke="#2e2e2e" stroke-width="1" /><text x="27.90" y="332.40" font-size="7.1" fill="#c8c8c8" text-anchor="middle" font-weight="normal" textLength="15.39" lengthAdjust="spacingAndGlyphs">10:00</text><line x1="81.18" y1="222.30" x2="81.18" y2="322.30" stroke="#2e2e2e" stroke-width="1" /><text x="81.18" y="332.40" font-size="7.1" fill="#c8c8c8" text-anchor="middle" font-weight="normal" textLength="15.39" lengthAdjust="spacingAndGlyphs">10:10</text><line x1="134.47" y1="222.30" x2="134.47" y2="322.30" stroke="#2e2e2e" stroke-width="1" /><text x="134.47" y="332.40" font-size="7.1" fill="#c8c8c8" text-anchor="middle" font-weight="normal" textLength="15.39" lengthAdjust="spacingAndGlyphs">10:20</text><line x1="187.75" y1="222.30" x2="187.75" y2="322.30" stroke="#2e2e2e" stroke-width="1" /><text x="187.75" y="332.40" font-size="7.1" fill="#c8c8c8" text-anchor="middle" font-weight="normal" textLength="15.39" lengthAdjust="spacingAndGlyphs">10:30</text><line x1="241.03" y1="222.30" x2="241.03" y2="322.30" stroke="#2e2e2e" stroke-width="1" /><text x="241.03" y="332.40" font-size="7.1" fill="#c8c8c8" text-anchor="middle" font-weight="normal" textLength="15.39" lengthAdjust="spacingAndGlyphs">10:40</text><line x1="294.32" y1="222.30" x2="294.32" y2="322.30" stroke="#2e2e2e" stroke-width="1" /><text x="294.32" y="332.40" font-size="7.1" fill="#c8c8c8" text-anchor="middle" font-weight="normal" textLength="15.39" lengthAdjust="spacingAndGlyphs">10:50</text><line x1="347.60" y1="222.30" x2="347.60" y2="322.30" stroke="#2e2e2e" stroke-width="1" /><text x="347.60" y="332.40" font-size="7.1" fill="#c8c8c8" text-anchor="middle" font-weight="normal" textLength="14.93" lengthAdjust="spacingAndGlyphs">11:00</text><rect x="26.00" y="301.50" width="328.00" height="20.80" fill="#3c6ea4" /><line x1="26.00" y1="301.50" x2="354.00" y2="301.50" stroke="#4a80bb" stroke-width="0.8" stroke-dasharray="1.2 1.2"/><line x1="81.18" y1="301.50" x2="81.18" y2="322.30" stroke="#4475aa" stroke-width="0.6" /><line x1="134.47" y1="301.50" x2="134.47" y2="322.30" stroke="#4475aa" stroke-width="0.6" /><line x1="187.75" y1="301.50" x2="187.75" y2="322.30" stroke="#4475aa" stroke-width="0.6" /><line x1="241.03" y1="301.50" x2="241.03" y2="322.30" stroke="#4475aa" stroke-width="0.6" /><line x1="294.32" y1="301.50" x2="294.32" y2="322.30" stroke="#4475aa" stroke-width="0.6" /><line x1="347.60" y1="301.50" x2="347.60" y2="322.30" stroke="#4475aa" stroke-width="0.6" /><line x1="26.00" y1="242.30" x2="354.00" y2="242.30" stroke="#8a1a0e" stroke-width="1.4" /><line x1="26.00" y1="272.30" x2="354.00" y2="272.30" stroke="#d5a411" stroke-width="1.4" /><rect x="364.70" y="226.30" width="6.50" height="2.20" fill="#447EBF" rx="0.8"/><text x="375.90" y="229.10" font-size="6.3" fill="#d8d8d8" text-anchor="start" font-weight="normal" >processes</text><rect x="363.20" y="233.00" width="48.00" height="11.30" fill="#232222" /><rect x="364.70" y="237.60" width="6.50" height="2.20" fill="#CCA300" rx="0.8"/><text x="375.90" y="240.40" font-size="6.3" fill="#d8d8d8" text-anchor="start" font-weight="normal" >WARNING</text><rect x="364.70" y="248.90" width="6.50" height="2.20" fill="#890F02" rx="0.8"/><text x="375.90" y="251.70" font-size="6.3" fill="#d8d8d8" text-anchor="start" font-weight="normal" >CRITICAL</text><rect x="421.50" y="203.50" width="410.00" height="134.00" fill="#1f1e1e" stroke="#262525" stroke-width="1"/><text x="626.50" y="213.80" font-size="7.6" fill="#d8d9da" text-anchor="middle" font-weight="bold" >Free Swap</text><line x1="453.60" y1="222.30" x2="771.30" y2="222.30" stroke="#2e2e2e" stroke-width="1" /><text x="451.10" y="224.90" font-size="7.0" fill="#c8c8c8" text-anchor="end" font-weight="normal" textLength="21.34" lengthAdjust="spacingAndGlyphs">1.2 GiB</text><line x1="453.60" y1="242.30" x2="771.30" y2="242.30" stroke="#2e2e2e" stroke-width="1" /><text x="451.10" y="244.90" font-size="7.0" fill="#c8c8c8" text-anchor="end" font-weight="normal" textLength="23.48" lengthAdjust="spacingAndGlyphs">954 MiB</text><line x1="453.60" y1="262.30" x2="771.30" y2="262.30" stroke="#2e2e2e" stroke-width="1" /><text x="451.10" y="264.90" font-size="7.0" fill="#c8c8c8" text-anchor="end" font-weight="normal" textLength="23.48" lengthAdjust="spacingAndGlyphs">715 MiB</text><line x1="453.60" y1="282.30" x2="771.30" y2="282.30" stroke="#2e2e2e" stroke-width="1" /><text x="451.10" y="284.90" font-size="7.0" fill="#c8c8c8" text-anchor="end" font-weight="normal" textLength="23.48" lengthAdjust="spacingAndGlyphs">477 MiB</text><line x1="453.60" y1="302.30" x2="771.30" y2="302.30" stroke="#2e2e2e" stroke-width="1" /><text x="451.10" y="304.90" font-size="7.0" fill="#c8c8c8" text-anchor="end" font-weight="normal" textLength="23.48" lengthAdjust="spacingAndGlyphs">238 MiB</text><line x1="453.60" y1="322.30" x2="771.30" y2="322.30" stroke="#2e2e2e" stroke-width="1" /><text x="451.10" y="324.90" font-size="7.0" fill="#c8c8c8" text-anchor="end" font-weight="normal" textLength="9.61" lengthAdjust="spacingAndGlyphs">0 B</text><line x1="455.30" y1="222.30" x2="455.30" y2="322.30" stroke="#2e2e2e" stroke-width="1" /><text x="455.30" y="332.40" font-size="7.1" fill="#c8c8c8" text-anchor="middle" font-weight="normal" textLength="15.39" lengthAdjust="spacingAndGlyphs">10:00</text><line x1="506.87" y1="222.30" x2="506.87" y2="322.30" stroke="#2e2e2e" stroke-width="1" /><text x="506.87" y="332.40" font-size="7.1" fill="#c8c8c8" text-anchor="middle" font-weight="normal" textLength="15.39" lengthAdjust="spacingAndGlyphs">10:10</text><line x1="558.43" y1="222.30" x2="558.43" y2="322.30" stroke="#2e2e2e" stroke-width="1" /><text x="558.43" y="332.40" font-size="7.1" fill="#c8c8c8" text-anchor="middle" font-weight="normal" textLength="15.39" lengthAdjust="spacingAndGlyphs">10:20</text><line x1="610.00" y1="222.30" x2="610.00" y2="322.30" stroke="#2e2e2e" stroke-width="1" /><text x="610.00" y="332.40" font-size="7.1" fill="#c8c8c8" text-anchor="middle" font-weight="normal" textLength="15.39" lengthAdjust="spacingAndGlyphs">10:30</text><line x1="661.57" y1="222.30" x2="661.57" y2="322.30" stroke="#2e2e2e" stroke-width="1" /><text x="661.57" y="332.40" font-size="7.1" fill="#c8c8c8" text-anchor="middle" font-weight="normal" textLength="15.39" lengthAdjust="spacingAndGlyphs">10:40</text><line x1="713.13" y1="222.30" x2="713.13" y2="322.30" stroke="#2e2e2e" stroke-width="1" /><text x="713.13" y="332.40" font-size="7.1" fill="#c8c8c8" text-anchor="middle" font-weight="normal" textLength="15.39" lengthAdjust="spacingAndGlyphs">10:50</text><line x1="764.70" y1="222.30" x2="764.70" y2="322.30" stroke="#2e2e2e" stroke-width="1" /><text x="764.70" y="332.40" font-size="7.1" fill="#c8c8c8" text-anchor="middle" font-weight="normal" textLength="14.93" lengthAdjust="spacingAndGlyphs">11:00</text><rect x="453.60" y="235.80" width="317.70" height="86.50" fill="#1f65a3" /><line x1="453.60" y1="236.20" x2="771.30" y2="236.20" stroke="#2a7fcf" stroke-width="0.9" /><line x1="455.30" y1="235.80" x2="455.30" y2="322.30" stroke="#2a70ad" stroke-width="0.7" /><line x1="506.87" y1="235.80" x2="506.87" y2="322.30" stroke="#2a70ad" stroke-width="0.7" /><line x1="558.43" y1="235.80" x2="558.43" y2="322.30" stroke="#2a70ad" stroke-width="0.7" /><line x1="610.00" y1="235.80" x2="610.00" y2="322.30" stroke="#2a70ad" stroke-width="0.7" /><line x1="661.57" y1="235.80" x2="661.57" y2="322.30" stroke="#2a70ad" stroke-width="0.7" /><line x1="713.13" y1="235.80" x2="713.13" y2="322.30" stroke="#2a70ad" stroke-width="0.7" /><line x1="764.70" y1="235.80" x2="764.70" y2="322.30" stroke="#2a70ad" stroke-width="0.7" /><line x1="453.60" y1="279.50" x2="771.30" y2="279.50" stroke="#d5b020" stroke-width="1.3" /><line x1="453.60" y1="300.90" x2="771.30" y2="300.90" stroke="#8a1e14" stroke-width="1.3" /><rect x="781.80" y="226.30" width="6.50" height="2.20" fill="#1F78C1" rx="0.8"/><text x="793.00" y="229.10" font-size="6.3" fill="#d8d8d8" text-anchor="start" font-weight="normal" >swap</text><rect x="780.30" y="233.00" width="48.00" height="11.30" fill="#232222" /><rect x="781.80" y="237.60" width="6.50" height="2.20" fill="#CCA300" rx="0.8"/><text x="793.00" y="240.40" font-size="6.3" fill="#d8d8d8" text-anchor="start" font-weight="normal" >WARNING</text><rect x="781.80" y="248.90" width="6.50" height="2.20" fill="#890F02" rx="0.8"/><text x="793.00" y="251.70" font-size="6.3" fill="#d8d8d8" text-anchor="start" font-weight="normal" >CRITICAL</text><rect x="6.50" y="343.50" width="409.00" height="134.00" fill="#1f1e1e" stroke="#262525" stroke-width="1"/><text x="211.00" y="353.80" font-size="7.6" fill="#d8d9da" text-anchor="middle" font-weight="bold" >Disk _</text><line x1="36.10" y1="362.30" x2="324.40" y2="362.30" stroke="#2e2e2e" stroke-width="1" /><text x="33.60" y="364.90" font-size="7.0" fill="#c8c8c8" text-anchor="end" font-weight="normal" textLength="21.34" lengthAdjust="spacingAndGlyphs">9.3 GiB</text><line x1="36.10" y1="382.38" x2="324.40" y2="382.38" stroke="#2e2e2e" stroke-width="1" /><text x="33.60" y="384.98" font-size="7.0" fill="#c8c8c8" text-anchor="end" font-weight="normal" textLength="21.34" lengthAdjust="spacingAndGlyphs">8.4 GiB</text><line x1="36.10" y1="402.46" x2="324.40" y2="402.46" stroke="#2e2e2e" stroke-width="1" /><text x="33.60" y="405.06" font-size="7.0" fill="#c8c8c8" text-anchor="end" font-weight="normal" textLength="21.34" lengthAdjust="spacingAndGlyphs">7.5 GiB</text><line x1="36.10" y1="422.54" x2="324.40" y2="422.54" stroke="#2e2e2e" stroke-width="1" /><text x="33.60" y="425.14" font-size="7.0" fill="#c8c8c8" text-anchor="end" font-weight="normal" textLength="21.34" lengthAdjust="spacingAndGlyphs">6.5 GiB</text><line x1="36.10" y1="442.62" x2="324.40" y2="442.62" stroke="#2e2e2e" stroke-width="1" /><text x="33.60" y="445.22" font-size="7.0" fill="#c8c8c8" text-anchor="end" font-weight="normal" textLength="21.34" lengthAdjust="spacingAndGlyphs">5.6 GiB</text><line x1="36.10" y1="462.70" x2="324.40" y2="462.70" stroke="#2e2e2e" stroke-width="1" /><text x="33.60" y="465.30" font-size="7.0" fill="#c8c8c8" text-anchor="end" font-weight="normal" textLength="21.34" lengthAdjust="spacingAndGlyphs">4.7 GiB</text><line x1="37.40" y1="362.30" x2="37.40" y2="462.70" stroke="#2e2e2e" stroke-width="1" /><text x="37.40" y="472.80" font-size="7.1" fill="#c8c8c8" text-anchor="middle" font-weight="normal" textLength="15.39" lengthAdjust="spacingAndGlyphs">10:00</text><line x1="84.17" y1="362.30" x2="84.17" y2="462.70" stroke="#2e2e2e" stroke-width="1" /><text x="84.17" y="472.80" font-size="7.1" fill="#c8c8c8" text-anchor="middle" font-weight="normal" textLength="15.39" lengthAdjust="spacingAndGlyphs">10:10</text><line x1="130.93" y1="362.30" x2="130.93" y2="462.70" stroke="#2e2e2e" stroke-width="1" /><text x="130.93" y="472.80" font-size="7.1" fill="#c8c8c8" text-anchor="middle" font-weight="normal" textLength="15.39" lengthAdjust="spacingAndGlyphs">10:20</text><line x1="177.70" y1="362.30" x2="177.70" y2="462.70" stroke="#2e2e2e" stroke-width="1" /><text x="177.70" y="472.80" font-size="7.1" fill="#c8c8c8" text-anchor="middle" font-weight="normal" textLength="15.39" lengthAdjust="spacingAndGlyphs">10:30</text><line x1="224.47" y1="362.30" x2="224.47" y2="462.70" stroke="#2e2e2e" stroke-width="1" /><text x="224.47" y="472.80" font-size="7.1" fill="#c8c8c8" text-anchor="middle" font-weight="normal" textLength="15.39" lengthAdjust="spacingAndGlyphs">10:40</text><line x1="271.23" y1="362.30" x2="271.23" y2="462.70" stroke="#2e2e2e" stroke-width="1" /><text x="271.23" y="472.80" font-size="7.1" fill="#c8c8c8" text-anchor="middle" font-weight="normal" textLength="15.39" lengthAdjust="spacingAndGlyphs">10:50</text><line x1="318.00" y1="362.30" x2="318.00" y2="462.70" stroke="#2e2e2e" stroke-width="1" /><text x="318.00" y="472.80" font-size="7.1" fill="#c8c8c8" text-anchor="middle" font-weight="normal" textLength="14.93" lengthAdjust="spacingAndGlyphs">11:00</text><rect x="36.10" y="374.00" width="288.30" height="88.70" fill="#0e3c6c" /><line x1="36.10" y1="382.38" x2="324.40" y2="382.38" stroke="#1a4775" stroke-width="0.7" /><line x1="36.10" y1="402.46" x2="324.40" y2="402.46" stroke="#1a4775" stroke-width="0.7" /><line x1="36.10" y1="422.54" x2="324.40" y2="422.54" stroke="#1a4775" stroke-width="0.7" /><line x1="36.10" y1="442.62" x2="324.40" y2="442.62" stroke="#1a4775" stroke-width="0.7" /><line x1="36.10" y1="462.70" x2="324.40" y2="462.70" stroke="#1a4775" stroke-width="0.7" /><rect x="36.10" y="456.00" width="288.30" height="6.70" fill="#5cb6cf" /><rect x="100.80" y="362.30" width="7.20" height="11.70" fill="#4a4a45" /><rect x="100.80" y="374.00" width="7.20" height="88.70" fill="#5a7a9a" fill-opacity="0.12"/><line x1="36.10" y1="393.80" x2="324.40" y2="393.80" stroke="#8a1a0e" stroke-width="1.4" /><line x1="36.10" y1="412.30" x2="324.40" y2="412.30" stroke="#d5b020" stroke-width="1.4" /><rect x="335.00" y="366.30" width="6.50" height="2.20" fill="#0A437C" rx="0.8"/><text x="346.20" y="369.10" font-size="6.3" fill="#d8d8d8" text-anchor="start" font-weight="normal" >max</text><rect x="333.50" y="373.00" width="76.00" height="11.30" fill="#232222" /><rect x="335.00" y="377.60" width="6.50" height="2.20" fill="#6ED0E0" rx="0.8"/><text x="346.20" y="380.40" font-size="6.3" fill="#d8d8d8" text-anchor="start" font-weight="normal" >free</text><rect x="335.00" y="388.90" width="6.50" height="2.20" fill="#CCA300" rx="0.8"/><text x="346.20" y="391.70" font-size="6.3" fill="#d8d8d8" text-anchor="start" font-weight="normal" >WARNING</text><rect x="333.50" y="395.60" width="76.00" height="11.30" fill="#232222" /><rect x="335.00" y="400.20" width="6.50" height="2.20" fill="#890F02" rx="0.8"/><text x="346.20" y="403.00" font-size="6.3" fill="#d8d8d8" text-anchor="start" font-weight="normal" >CRITICAL</text><rect x="335.00" y="411.50" width="6.50" height="2.20" fill="#ffffff" rx="0.8"/><text x="346.20" y="414.30" font-size="6.3" fill="#e0e0e0" text-anchor="start" font-weight="normal" textLength="33" lengthAdjust="spacingAndGlyphs">DOWNTIME</text><text x="382.60" y="414.30" font-size="6.6" fill="#7b7b7b" textLength="21" lengthAdjust="spacingAndGlyphs">(right-y)</text><rect x="421.50" y="343.50" width="410.00" height="134.00" fill="#1f1e1e" stroke="#262525" stroke-width="1"/><text x="626.50" y="353.80" font-size="7.6" fill="#d8d9da" text-anchor="middle" font-weight="bold" >Users logged in</text><line x1="443.20" y1="362.30" x2="783.90" y2="362.30" stroke="#2e2e2e" stroke-width="1" /><text x="440.70" y="364.90" font-size="7.0" fill="#c8c8c8" text-anchor="end" font-weight="normal" textLength="12.46" lengthAdjust="spacingAndGlyphs">1.25</text><line x1="443.20" y1="382.38" x2="783.90" y2="382.38" stroke="#2e2e2e" stroke-width="1" /><text x="440.70" y="384.98" font-size="7.0" fill="#c8c8c8" text-anchor="end" font-weight="normal" textLength="12.46" lengthAdjust="spacingAndGlyphs">1.00</text><line x1="443.20" y1="402.46" x2="783.90" y2="402.46" stroke="#2e2e2e" stroke-width="1" /><text x="440.70" y="405.06" font-size="7.0" fill="#c8c8c8" text-anchor="end" font-weight="normal" textLength="12.46" lengthAdjust="spacingAndGlyphs">0.75</text><line x1="443.20" y1="422.54" x2="783.90" y2="422.54" stroke="#2e2e2e" stroke-width="1" /><text x="440.70" y="425.14" font-size="7.0" fill="#c8c8c8" text-anchor="end" font-weight="normal" textLength="12.46" lengthAdjust="spacingAndGlyphs">0.50</text><line x1="443.20" y1="442.62" x2="783.90" y2="442.62" stroke="#2e2e2e" stroke-width="1" /><text x="440.70" y="445.22" font-size="7.0" fill="#c8c8c8" text-anchor="end" font-weight="normal" textLength="12.46" lengthAdjust="spacingAndGlyphs">0.25</text><line x1="443.20" y1="462.70" x2="783.90" y2="462.70" stroke="#2e2e2e" stroke-width="1" /><text x="440.70" y="465.30" font-size="7.0" fill="#c8c8c8" text-anchor="end" font-weight="normal" textLength="3.56" lengthAdjust="spacingAndGlyphs">0</text><line x1="445.00" y1="362.30" x2="445.00" y2="462.70" stroke="#2e2e2e" stroke-width="1" /><text x="445.00" y="472.80" font-size="7.1" fill="#c8c8c8" text-anchor="middle" font-weight="normal" textLength="15.39" lengthAdjust="spacingAndGlyphs">10:00</text><line x1="500.47" y1="362.30" x2="500.47" y2="462.70" stroke="#2e2e2e" stroke-width="1" /><text x="500.47" y="472.80" font-size="7.1" fill="#c8c8c8" text-anchor="middle" font-weight="normal" textLength="15.39" lengthAdjust="spacingAndGlyphs">10:10</text><line x1="555.93" y1="362.30" x2="555.93" y2="462.70" stroke="#2e2e2e" stroke-width="1" /><text x="555.93" y="472.80" font-size="7.1" fill="#c8c8c8" text-anchor="middle" font-weight="normal" textLength="15.39" lengthAdjust="spacingAndGlyphs">10:20</text><line x1="611.40" y1="362.30" x2="611.40" y2="462.70" stroke="#2e2e2e" stroke-width="1" /><text x="611.40" y="472.80" font-size="7.1" fill="#c8c8c8" text-anchor="middle" font-weight="normal" textLength="15.39" lengthAdjust="spacingAndGlyphs">10:30</text><line x1="666.87" y1="362.30" x2="666.87" y2="462.70" stroke="#2e2e2e" stroke-width="1" /><text x="666.87" y="472.80" font-size="7.1" fill="#c8c8c8" text-anchor="middle" font-weight="normal" textLength="15.39" lengthAdjust="spacingAndGlyphs">10:40</text><line x1="722.33" y1="362.30" x2="722.33" y2="462.70" stroke="#2e2e2e" stroke-width="1" /><text x="722.33" y="472.80" font-size="7.1" fill="#c8c8c8" text-anchor="middle" font-weight="normal" textLength="15.39" lengthAdjust="spacingAndGlyphs">10:50</text><line x1="777.80" y1="362.30" x2="777.80" y2="462.70" stroke="#2e2e2e" stroke-width="1" /><text x="777.80" y="472.80" font-size="7.1" fill="#c8c8c8" text-anchor="middle" font-weight="normal" textLength="14.93" lengthAdjust="spacingAndGlyphs">11:00</text><rect x="443.00" y="382.20" width="284.00" height="80.50" fill="#1e62a0" /><rect x="444.70" y="382.20" width="1.60" height="80.50" fill="#1a5791" fill-opacity="0.75"/><rect x="450.50" y="382.20" width="1.60" height="80.50" fill="#1a5791" fill-opacity="0.75"/><rect x="454.90" y="382.20" width="1.00" height="80.50" fill="#1a5791" fill-opacity="0.75"/><rect x="460.10" y="382.20" width="1.00" height="80.50" fill="#1a5791" fill-opacity="0.75"/><rect x="463.30" y="382.20" width="1.60" height="80.50" fill="#1a5791" fill-opacity="0.75"/><rect x="468.30" y="382.20" width="1.00" height="80.50" fill="#1a5791" fill-opacity="0.75"/><rect x="471.50" y="382.20" width="0.80" height="80.50" fill="#1a5791" fill-opacity="0.75"/><rect x="476.50" y="382.20" width="1.60" height="80.50" fill="#1a5791" fill-opacity="0.75"/><rect x="480.90" y="382.20" width="0.80" height="80.50" fill="#1a5791" fill-opacity="0.75"/><rect x="483.90" y="382.20" width="0.80" height="80.50" fill="#1a5791" fill-opacity="0.75"/><rect x="486.90" y="382.20" width="1.00" height="80.50" fill="#1a5791" fill-opacity="0.75"/><rect x="490.70" y="382.20" width="0.80" height="80.50" fill="#1a5791" fill-opacity="0.75"/><rect x="495.70" y="382.20" width="1.30" height="80.50" fill="#1a5791" fill-opacity="0.75"/><rect x="501.20" y="382.20" width="1.00" height="80.50" fill="#1a5791" fill-opacity="0.75"/><rect x="505.00" y="382.20" width="1.30" height="80.50" fill="#1a5791" fill-opacity="0.75"/><rect x="510.50" y="382.20" width="0.80" height="80.50" fill="#1a5791" fill-opacity="0.75"/><rect x="513.50" y="382.20" width="1.60" height="80.50" fill="#1a5791" fill-opacity="0.75"/><rect x="518.50" y="382.20" width="1.60" height="80.50" fill="#1a5791" fill-opacity="0.75"/><rect x="522.30" y="382.20" width="1.30" height="80.50" fill="#1a5791" fill-opacity="0.75"/><rect x="527.00" y="382.20" width="1.00" height="80.50" fill="#1a5791" fill-opacity="0.75"/><rect x="531.40" y="382.20" width="0.80" height="80.50" fill="#1a5791" fill-opacity="0.75"/><rect x="534.40" y="382.20" width="0.80" height="80.50" fill="#1a5791" fill-opacity="0.75"/><rect x="539.40" y="382.20" width="0.80" height="80.50" fill="#1a5791" fill-opacity="0.75"/><rect x="543.60" y="382.20" width="1.60" height="80.50" fill="#1a5791" fill-opacity="0.75"/><rect x="547.40" y="382.20" width="0.80" height="80.50" fill="#1a5791" fill-opacity="0.75"/><rect x="550.40" y="382.20" width="1.00" height="80.50" fill="#1a5791" fill-opacity="0.75"/><rect x="554.20" y="382.20" width="0.80" height="80.50" fill="#1a5791" fill-opacity="0.75"/><rect x="559.20" y="382.20" width="1.60" height="80.50" fill="#1a5791" fill-opacity="0.75"/><rect x="565.00" y="382.20" width="1.60" height="80.50" fill="#1a5791" fill-opacity="0.75"/><rect x="568.80" y="382.20" width="1.00" height="80.50" fill="#1a5791" fill-opacity="0.75"/><rect x="573.20" y="382.20" width="1.30" height="80.50" fill="#1a5791" fill-opacity="0.75"/><rect x="576.70" y="382.20" width="1.30" height="80.50" fill="#1a5791" fill-opacity="0.75"/><rect x="581.40" y="382.20" width="0.80" height="80.50" fill="#1a5791" fill-opacity="0.75"/><rect x="586.40" y="382.20" width="0.80" height="80.50" fill="#1a5791" fill-opacity="0.75"/><rect x="590.00" y="382.20" width="1.00" height="80.50" fill="#1a5791" fill-opacity="0.75"/><rect x="593.20" y="382.20" width="0.80" height="80.50" fill="#1a5791" fill-opacity="0.75"/><rect x="596.20" y="382.20" width="1.60" height="80.50" fill="#1a5791" fill-opacity="0.75"/><rect x="602.00" y="382.20" width="1.00" height="80.50" fill="#1a5791" fill-opacity="0.75"/><rect x="605.80" y="382.20" width="1.60" height="80.50" fill="#1a5791" fill-opacity="0.75"/><rect x="610.20" y="382.20" width="1.00" height="80.50" fill="#1a5791" fill-opacity="0.75"/><rect x="615.40" y="382.20" width="1.60" height="80.50" fill="#1a5791" fill-opacity="0.75"/><rect x="619.20" y="382.20" width="1.60" height="80.50" fill="#1a5791" fill-opacity="0.75"/><rect x="625.00" y="382.20" width="1.00" height="80.50" fill="#1a5791" fill-opacity="0.75"/><rect x="628.20" y="382.20" width="1.30" height="80.50" fill="#1a5791" fill-opacity="0.75"/><rect x="632.90" y="382.20" width="0.80" height="80.50" fill="#1a5791" fill-opacity="0.75"/><rect x="636.50" y="382.20" width="1.00" height="80.50" fill="#1a5791" fill-opacity="0.75"/><rect x="641.70" y="382.20" width="0.80" height="80.50" fill="#1a5791" fill-opacity="0.75"/><rect x="644.70" y="382.20" width="1.00" height="80.50" fill="#1a5791" fill-opacity="0.75"/><rect x="648.50" y="382.20" width="1.60" height="80.50" fill="#1a5791" fill-opacity="0.75"/><rect x="653.50" y="382.20" width="0.80" height="80.50" fill="#1a5791" fill-opacity="0.75"/><rect x="657.70" y="382.20" width="1.30" height="80.50" fill="#1a5791" fill-opacity="0.75"/><rect x="663.20" y="382.20" width="0.80" height="80.50" fill="#1a5791" fill-opacity="0.75"/><rect x="666.20" y="382.20" width="0.80" height="80.50" fill="#1a5791" fill-opacity="0.75"/><rect x="669.80" y="382.20" width="1.00" height="80.50" fill="#1a5791" fill-opacity="0.75"/><rect x="673.00" y="382.20" width="1.30" height="80.50" fill="#1a5791" fill-opacity="0.75"/><rect x="677.70" y="382.20" width="1.60" height="80.50" fill="#1a5791" fill-opacity="0.75"/><rect x="682.10" y="382.20" width="1.60" height="80.50" fill="#1a5791" fill-opacity="0.75"/><rect x="686.50" y="382.20" width="1.60" height="80.50" fill="#1a5791" fill-opacity="0.75"/><rect x="690.90" y="382.20" width="1.00" height="80.50" fill="#1a5791" fill-opacity="0.75"/><rect x="695.30" y="382.20" width="1.00" height="80.50" fill="#1a5791" fill-opacity="0.75"/><rect x="699.10" y="382.20" width="1.00" height="80.50" fill="#1a5791" fill-opacity="0.75"/><rect x="702.90" y="382.20" width="1.00" height="80.50" fill="#1a5791" fill-opacity="0.75"/><rect x="708.10" y="382.20" width="1.60" height="80.50" fill="#1a5791" fill-opacity="0.75"/><rect x="711.90" y="382.20" width="1.60" height="80.50" fill="#1a5791" fill-opacity="0.75"/><rect x="715.70" y="382.20" width="0.80" height="80.50" fill="#1a5791" fill-opacity="0.75"/><rect x="718.70" y="382.20" width="0.80" height="80.50" fill="#1a5791" fill-opacity="0.75"/><rect x="722.90" y="382.20" width="1.00" height="80.50" fill="#1a5791" fill-opacity="0.75"/><line x1="443.20" y1="402.46" x2="727.00" y2="402.46" stroke="#3a78b0" stroke-width="0.6" stroke-opacity="0.45"/><line x1="443.20" y1="422.54" x2="727.00" y2="422.54" stroke="#3a78b0" stroke-width="0.6" stroke-opacity="0.45"/><line x1="443.20" y1="442.62" x2="727.00" y2="442.62" stroke="#3a78b0" stroke-width="0.6" stroke-opacity="0.45"/><line x1="443.20" y1="462.70" x2="727.00" y2="462.70" stroke="#3a78b0" stroke-width="0.6" stroke-opacity="0.45"/><rect x="794.40" y="366.30" width="6.50" height="2.20" fill="#1F78C1" rx="0.8"/><text x="805.60" y="369.10" font-size="6.3" fill="#d8d8d8" text-anchor="start" font-weight="normal" >users</text><g stroke="#ffffff" stroke-width="0.9"><line x1="860.9" y1="99.9" x2="870.3" y2="79.6"/><line x1="860.9" y1="99.9" x2="886.1" y2="94.1"/><line x1="860.9" y1="99.9" x2="848.1" y2="119.3"/><line x1="860.9" y1="99.9" x2="848.4" y2="89.1"/><line x1="860.9" y1="99.9" x2="869.1" y2="114.1"/></g><g fill="#ffffff"><circle cx="860.9" cy="99.9" r="8.1"/><circle cx="870.3" cy="79.6" r="4.4"/><circle cx="886.1" cy="94.1" r="3.5"/><circle cx="848.1" cy="119.3" r="5.6"/><circle cx="848.4" cy="89.1" r="2.55"/><circle cx="869.1" cy="114.1" r="1.85"/></g><g fill="none" stroke="#ffffff" stroke-width="4.4" stroke-linecap="round" stroke-linejoin="round"><path d="M886.5,103.1 L886.5,126.9"/><path d="M910.2,108.3 A7.8,7.8 0 0 0 895.2,110.6 L895.2,119.8 A7.8,7.8 0 0 0 910.2,122.4"/><path d="M919.1,103.1 L919.1,126.9"/><path d="M927.6,126.9 L927.6,110.4 A8,8 0 0 1 943.6,110.4 L943.6,126.9"/><path d="M967.8,108.5 A7.8,7.8 0 0 0 952.8,110.4 L952.8,119.8 A7.8,7.8 0 0 0 968.4,119.8 L968.4,116.2 L964.2,116.2"/><path d="M975.7,126.1 L985.4,103.3 L994.7,126.1 M979.6,119.1 L991.2,119.1"/></g><text x="842.60" y="146.30" font-size="8.0" fill="#d8d8d8" text-anchor="start" font-weight="normal" textLength="127.55" lengthAdjust="spacingAndGlyphs">Extend this dashboard by adding more</text><text x="842.60" y="157.55" font-size="8.0" fill="#d8d8d8" text-anchor="start" font-weight="normal" textLength="120.91" lengthAdjust="spacingAndGlyphs">services to your Icinga configuration.</text><text x="842.60" y="168.80" font-size="8.0" fill="#d8d8d8" text-anchor="start" font-weight="normal" textLength="142.85" lengthAdjust="spacingAndGlyphs">Correlate thresholds with performance data</text><text x="842.60" y="180.05" font-size="8.0" fill="#d8d8d8" text-anchor="start" font-weight="normal" textLength="80.75" lengthAdjust="spacingAndGlyphs">and maintenance works.</text><text x="842.80" y="225.30" font-size="9.6" fill="#e8e8e8" text-anchor="start" font-weight="bold" >Thresholds</text><text x="842.60" y="242.00" font-size="8.0" fill="#d8d8d8" text-anchor="start" font-weight="normal" textLength="115.12" lengthAdjust="spacingAndGlyphs">The thresholds shown here are the</text><text x="842.60" y="253.25" font-size="8.0" fill="#d8d8d8" text-anchor="start" font-weight="normal" textLength="135.83" lengthAdjust="spacingAndGlyphs">thresholds you configured in your Icinga2</text><text x="842.60" y="264.50" font-size="8.0" fill="#d8d8d8" text-anchor="start" font-weight="normal" textLength="109.74" lengthAdjust="spacingAndGlyphs">configuration. Changing them will</text><text x="842.60" y="275.75" font-size="8.0" fill="#d8d8d8" text-anchor="start" font-weight="normal" textLength="125.88" lengthAdjust="spacingAndGlyphs">automatically also change them in this</text><text x="842.60" y="287.00" font-size="8.0" fill="#d8d8d8" text-anchor="start" font-weight="normal" textLength="147.01" lengthAdjust="spacingAndGlyphs">dashboard. When values exceed thresholds,</text><text x="842.60" y="298.25" font-size="8.0" fill="#d8d8d8" text-anchor="start" font-weight="normal" textLength="139.55" lengthAdjust="spacingAndGlyphs">it is an indicator that alerts have been sent</text><text x="842.60" y="309.50" font-size="8.0" fill="#d8d8d8" text-anchor="start" font-weight="normal" textLength="122.13" lengthAdjust="spacingAndGlyphs">from your Icinga2 monitoring system.</text><text x="842.80" y="365.20" font-size="9.9" fill="#e8e8e8" text-anchor="start" font-weight="bold" >Downtimes</text><text x="842.60" y="382.80" font-size="8.0" fill="#d8d8d8" text-anchor="start" font-weight="normal" textLength="134.57" lengthAdjust="spacingAndGlyphs">When setting a downtime, for example in</text><text x="842.60" y="394.05" font-size="8.0" fill="#d8d8d8" text-anchor="start" font-weight="normal" textLength="146.85" lengthAdjust="spacingAndGlyphs">IcingaWeb or via API, it will be marked in the</text><text x="842.60" y="405.30" font-size="8.0" fill="#d8d8d8" text-anchor="start" font-weight="normal" textLength="128.94" lengthAdjust="spacingAndGlyphs">affected graph. To get a clean view, the</text><text x="842.60" y="416.55" font-size="8.0" fill="#d8d8d8" text-anchor="start" font-weight="normal" textLength="134.58" lengthAdjust="spacingAndGlyphs">graph legend will display downtimes only</text><text x="842.60" y="427.80" font-size="8.0" fill="#d8d8d8" text-anchor="start" font-weight="normal" textLength="142.43" lengthAdjust="spacingAndGlyphs">when they exist. Downtimes are usually set</text><text x="842.60" y="439.05" font-size="8.0" fill="#d8d8d8" text-anchor="start" font-weight="normal" textLength="139.13" lengthAdjust="spacingAndGlyphs">for maintenance work and are an indicator</text><text x="842.60" y="450.30" font-size="8.0" fill="#d8d8d8" text-anchor="start" font-weight="normal" textLength="139.57" lengthAdjust="spacingAndGlyphs">that graphed data is changing on purpose.</text><rect x="951.00" y="484.00" width="44.00" height="12.60" fill="#12689a" rx="1.5"/><path d="M956.6,488 L956.6,493 M954.1,490.5 L959.1,490.5" stroke="#ffffff" stroke-width="1.6"/><text x="960.50" y="492.80" font-size="6.3" fill="#e8eef2" text-anchor="start" font-weight="normal" >ADD ROW</text></svg>
</body></html>
